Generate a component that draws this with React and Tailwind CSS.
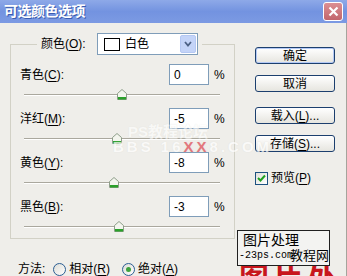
import React from 'react';

const rows = [
  { label: '青色', key: 'C', value: 0 },
  { label: '洋红', key: 'M', value: -5 },
  { label: '黄色', key: 'Y', value: -8 },
  { label: '黑色', key: 'B', value: -3 },
];

const Thumb = () => (
  <svg width="10" height="11" viewBox="0 0 10 11">
    <path d="M0.5 4.5 L5 0.5 L9.5 4.5 V10.5 H0.5 Z" fill="#f3f5ee" stroke="#8e9e8a" />
    <rect x="1" y="8" width="8" height="2.5" fill="#2aa02a" />
  </svg>
);

const Slider = ({ value, last }) => {
  // -100..100 mapped onto the 196px track
  const left = 98 + (value / 100) * 98 - 5;
  return (
    <div className={`relative ml-[4px] w-[196px] ${last ? 'h-[21px]' : 'h-[23px]'}`}>
      <div className="pt-[9px]">
        <div className="h-[2px] border-t border-[#aaa89e] bg-white" />
      </div>
      <div className="absolute top-[4px]" style={{ left }}>
        <Thumb />
      </div>
    </div>
  );
};

const Button = ({ children, primary }) => (
  <div
    className={`flex h-[17px] w-[80px] items-center justify-center rounded-[3px] border border-[#1c3f6e] bg-gradient-to-b from-white to-[#e6e5df] text-[12px] leading-none text-black ${
      primary ? 'shadow-[inset_0_0_0_1px_#b4c9f5]' : ''
    }`}
  >
    {children}
  </div>
);

const Radio = ({ checked }) => (
  <div className="flex h-[13px] w-[13px] items-center justify-center rounded-full border border-[#2b5e93] bg-gradient-to-br from-[#dcdcd6] to-white">
    {checked && <div className="h-[5px] w-[5px] rounded-full bg-[#3da23d]" />}
  </div>
);

export default function App() {
  return (
    <div className="relative h-[276px] w-[347px] overflow-hidden bg-[#efeeea] font-[Liberation_Sans,Noto_Sans_CJK_SC,sans-serif] text-[12px] text-black">
      {/* title bar */}
      <div className="flex h-[23px] items-center justify-between bg-gradient-to-b from-[#8ea9e8] via-[#7393e0] to-[#7c9ae3] pl-[4px] pr-[4px]">
        <span className="text-[14px] font-bold tracking-[-0.5px] text-white [text-shadow:1px_1px_0_#3a5cb0]">
          可选颜色选项
        </span>
        <div className="flex h-[19px] w-[20px] items-center justify-center rounded-[3px] border border-white bg-gradient-to-b from-[#dc8f93] to-[#c2666c]">
          <svg width="11" height="11" viewBox="0 0 11 11">
            <path d="M1.5 1.5 L9.5 9.5 M9.5 1.5 L1.5 9.5" stroke="white" strokeWidth="2.2" />
          </svg>
        </div>
      </div>

      <div className="flex h-[253px] border-r border-[#a5a49c]">
        {/* left column */}
        <div className="w-[245px] pl-[10px]">
          <fieldset className="mt-[10px] h-[206px] w-[223px] border border-[#d2d1c6] px-[9px] pt-[9px]">
            <legend className="ml-[17px] px-[4px]">
              <div className="flex h-[22px] items-center">
                <span className="w-[56px]">
                  颜色(<span className="underline underline-offset-2">O</span>):
                </span>
                <div className="flex h-[22px] w-[101px] items-center border border-[#7f9db9] bg-white pl-[6px] pr-[1px]">
                  <div className="h-[13px] w-[16px] border border-black bg-white" />
                  <span className="ml-[5px] flex-1">白色</span>
                  <div className="flex h-[18px] w-[16px] items-center justify-center rounded-[2px] border border-[#b5c8f3] bg-[#c4d4f8]">
                    <svg width="8" height="6" viewBox="0 0 8 6">
                      <path d="M1 1 L4 4.5 L7 1" fill="none" stroke="#4d6185" strokeWidth="1.8" />
                    </svg>
                  </div>
                </div>
              </div>
            </legend>
            {rows.map((r, i) => (
              <div key={r.key}>
                <div className="flex h-[21px] items-center">
                  <span className="w-[149px]">
                    {r.label}(<span className="underline underline-offset-2">{r.key}</span>):
                  </span>
                  <div className="flex h-[21px] w-[40px] items-center border border-[#7f9db9] bg-white px-[4px]">
                    {r.value}
                  </div>
                  <span className="ml-[5px]">%</span>
                </div>
                <Slider value={r.value} last={i === rows.length - 1} />
              </div>
            ))}
          </fieldset>

          <div className="mt-[22px] flex h-[16px] items-center pl-[8px]">
            <span>方法:</span>
            <div className="ml-[8px]">
              <Radio />
            </div>
            <span className="ml-[3px]">
              相对(<span className="underline underline-offset-2">R</span>)
            </span>
            <div className="ml-[12px]">
              <Radio checked />
            </div>
            <span className="ml-[3px]">
              绝对(<span className="underline underline-offset-2">A</span>)
            </span>
          </div>
        </div>

        {/* right column */}
        <div className="flex flex-col pl-[10px] pt-[24px]">
          <Button primary>确定</Button>
          <div className="mt-[11px]">
            <Button>取消</Button>
          </div>
          <div className="mt-[15px]">
            <Button>
              载入(<span className="underline underline-offset-2">L</span>)...
            </Button>
          </div>
          <div className="mt-[11px]">
            <Button>
              存储(<span className="underline underline-offset-2">S</span>)...
            </Button>
          </div>
          <div className="mt-[17px] flex items-center">
            <div className="flex h-[13px] w-[13px] items-center justify-center border border-[#1c5180] bg-gradient-to-br from-[#e0e0da] to-white">
              <svg width="9" height="8" viewBox="0 0 9 8">
                <path d="M1 4 L3.5 6.5 L8 1.5" fill="none" stroke="#21a121" strokeWidth="2" />
              </svg>
            </div>
            <span className="ml-[3px]">
              预览(<span className="underline underline-offset-2">P</span>)
            </span>
          </div>
        </div>
      </div>

      {/* faint forum watermark */}
      <div className="pointer-events-none absolute left-[128px] top-[121px] text-[15px] font-bold text-white opacity-60 [text-shadow:0_0_1px_#d8d8d0]">
        PS教程论坛
      </div>
      <div className="pointer-events-none absolute left-[113px] top-[136px] flex text-[15px] font-bold tracking-[3px] text-white opacity-70 [text-shadow:0_0_1px_#d8d8d0]">
        <span>BBS 16</span>
        <span className="text-[#e0454f]">XX</span>
        <span>8.COM</span>
      </div>

      {/* site stamp, with the big red lettering peeking below it */}
      <div className="absolute left-[239px] top-[264px] text-[30px] font-bold leading-none tracking-[4px] text-[#c8161d]">
        图片处
      </div>
      <div className="absolute left-[237px] top-[230px] h-[36px] w-[93px] border border-[#202020] bg-[#f3f3f1]">
        <div className="pl-[5px] pt-[1px] text-[14px] leading-[17px] text-black">图片处理</div>
        <div className="pl-[1px] font-[Liberation_Mono,monospace] text-[10px] leading-[14px] text-black">
          -23ps.com
        </div>
        <div className="absolute left-[52px] top-[17px] text-[13px] leading-[16px] text-black">教程网</div>
      </div>
    </div>
  );
}
